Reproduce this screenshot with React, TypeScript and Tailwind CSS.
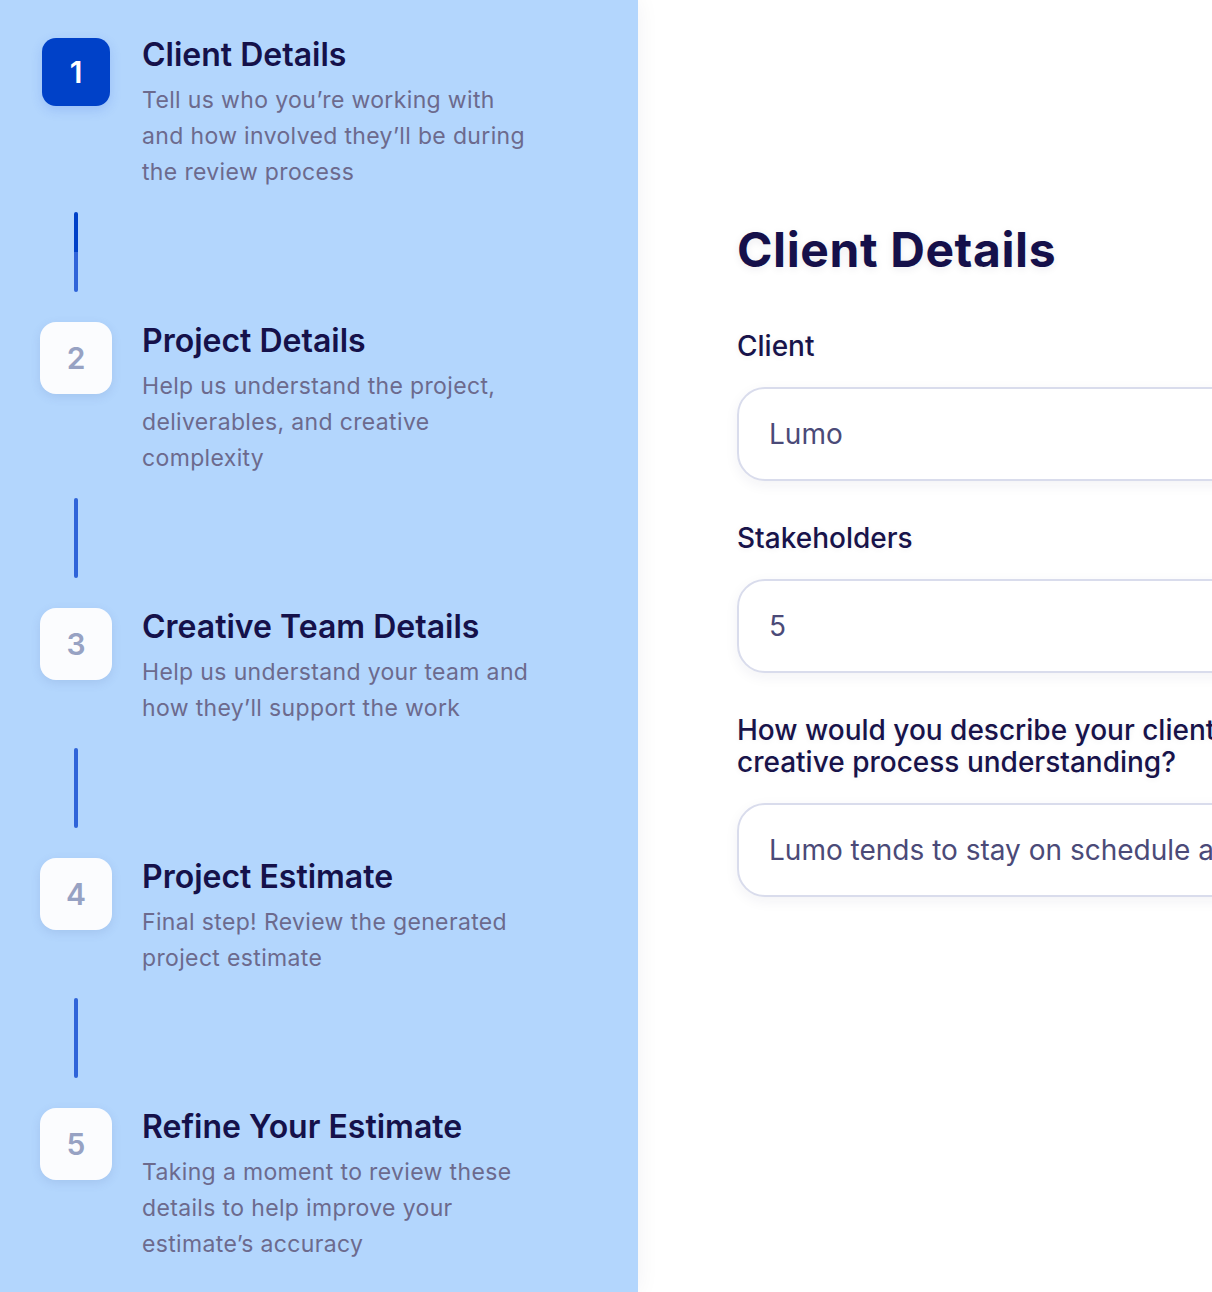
import { Fragment } from "react";

type Step = {
  n: number;
  title: string;
  desc: string;
  active?: boolean;
};

const steps: Step[] = [
  {
    n: 1,
    title: "Client Details",
    desc: "Tell us who you’re working with and how involved they’ll be during the review process",
    active: true,
  },
  {
    n: 2,
    title: "Project Details",
    desc: "Help us understand the project, deliverables, and creative complexity",
  },
  {
    n: 3,
    title: "Creative Team Details",
    desc: "Help us understand your team and how they’ll support the work",
  },
  {
    n: 4,
    title: "Project Estimate",
    desc: "Final step! Review the generated project estimate",
  },
  {
    n: 5,
    title: "Refine Your Estimate",
    desc: "Taking a moment to review these details to help improve your estimate’s accuracy",
  },
];

function StepBadge({ n, active }: { n: number; active?: boolean }) {
  if (active) {
    return (
      <div className="flex h-[72px] w-[72px] shrink-0 items-center justify-center">
        <div className="flex h-[68px] w-[68px] items-center justify-center rounded-[14px] bg-[#0041c8] text-[30px] font-semibold text-white shadow-[0_4px_12px_rgba(40,90,220,0.18)]">
          {n}
        </div>
      </div>
    );
  }
  return (
    <div className="flex h-[72px] w-[72px] shrink-0 items-center justify-center rounded-[16px] bg-[#fbfcfe] text-[30px] font-semibold text-[#97a2c3] shadow-[0_3px_10px_rgba(90,110,170,0.16)]">
      {n}
    </div>
  );
}

function Field({
  label,
  value,
}: {
  label: string;
  value: string;
}) {
  return (
    <div className="flex flex-col">
      <label className="text-[28px] leading-[32px] font-medium text-[#18134a] [text-shadow:0_1px_6px_rgba(20,20,60,0.06)]">
        {label}
      </label>
      <div className="mt-[25px] flex h-[94px] items-center overflow-hidden rounded-[28px] border-2 border-[#d9dcec] bg-white pl-[30px] shadow-[0_4px_14px_rgba(30,40,90,0.06)]">
        <span className="whitespace-nowrap text-[28px] text-[#4b4a78]">{value}</span>
      </div>
    </div>
  );
}

export default function App() {
  return (
    <div
      className="flex h-[1292px] w-[1212px] overflow-hidden bg-white"
      style={{ fontFamily: "Inter, 'Noto Sans', sans-serif" }}
    >
      <aside className="relative z-10 flex w-[638px] shrink-0 flex-col bg-[#b3d6fd] pl-[40px] pt-[36px] shadow-[0_0_22px_rgba(20,30,60,0.06)]">
        {steps.map((s, i) => (
          <Fragment key={s.n}>
            <div className="flex items-start gap-[30px]">
              <StepBadge n={s.n} active={s.active} />
              <div className="-mt-[1px] w-[395px]">
                <h2 className="text-[32px] leading-[40px] font-semibold text-[#15114a]">
                  {s.title}
                </h2>
                <p className="mt-[7px] text-[23px] leading-[36px] tracking-[0.35px] text-[#6c6a8d]">
                  {s.desc}
                </p>
              </div>
            </div>
            {i < steps.length - 1 && (
              <div className="ml-[34px] mt-[22px] mb-[30px] flex h-[80px] w-[4px] flex-col overflow-hidden rounded-full">
                {s.active ? (
                  <>
                    <div className="h-[40px] bg-[#0041c8]" />
                    <div className="h-[40px] bg-[#2f64d9]" />
                  </>
                ) : (
                  <div className="h-[80px] bg-[#2f64d9]" />
                )}
              </div>
            )}
          </Fragment>
        ))}
      </aside>

      <main className="flex-1 pl-[99px] pt-[222px]">
        <div className="w-[560px]">
          <h1 className="text-[48px] leading-[56px] font-bold tracking-[0.6px] text-[#15104a] [text-shadow:0_2px_8px_rgba(20,20,60,0.08)]">
            Client Details
          </h1>
          <div className="mt-[52px] flex flex-col gap-[41px]">
            <Field label="Client" value="Lumo" />
            <Field label="Stakeholders" value="5" />
            <Field
              label="How would you describe your client’s creative process understanding?"
              value="Lumo tends to stay on schedule and review work promptly"
            />
          </div>
        </div>
      </main>
    </div>
  );
}
